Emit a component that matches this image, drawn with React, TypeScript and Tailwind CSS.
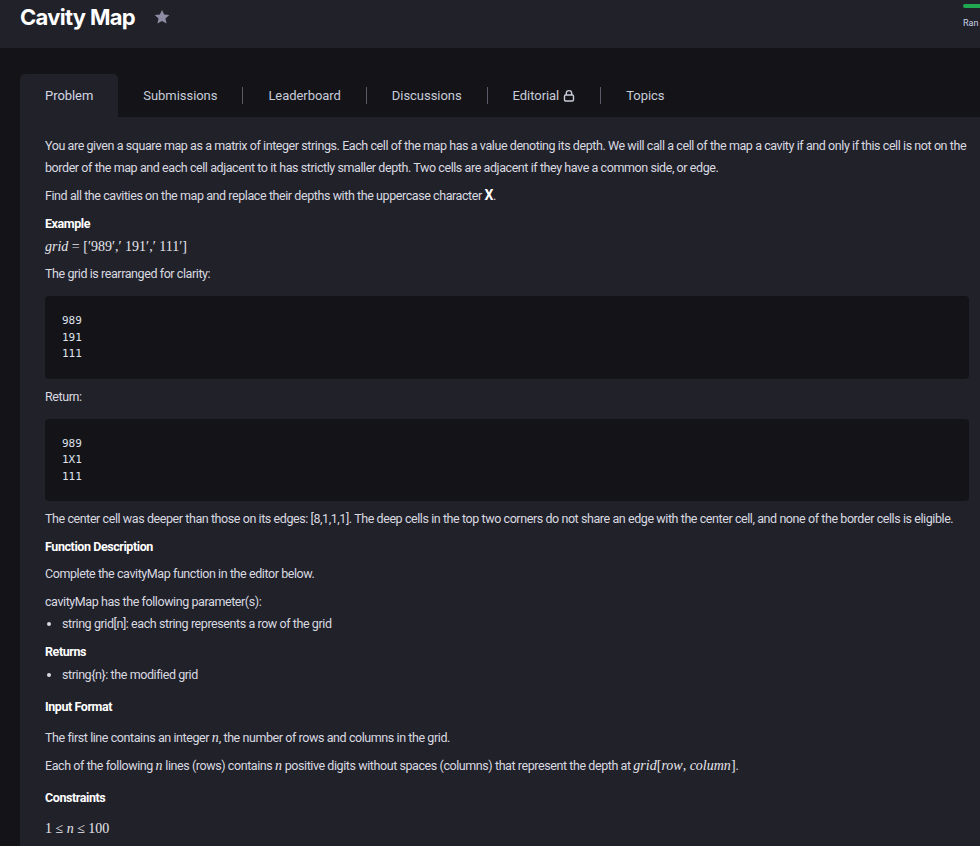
import React from 'react';

const tabs = ['Problem', 'Submissions', 'Leaderboard', 'Discussions', 'Editorial', 'Topics'];

const Lock: React.FC = () => (
    <svg width="12" height="13" viewBox="0 0 12 13" fill="none" stroke="currentColor" strokeWidth="1.4" className="ml-[4px]">
        <path d="M3.3 6V4.3a2.7 2.7 0 0 1 5.4 0V6" />
        <rect x="1.5" y="6" width="9" height="6" rx="1.2" />
    </svg>
);

const Math: React.FC<{ children: React.ReactNode }> = ({ children }) => (
    <span className="font-['Liberation_Serif',serif] text-[14px] tracking-normal text-[#e6e6ea]">{children}</span>
);

const I: React.FC<{ children: React.ReactNode }> = ({ children }) => <i className="italic">{children}</i>;

const Code: React.FC<{ lines: string[] }> = ({ lines }) => (
    <pre className="bg-[#141418] rounded-[4px] px-[17px] pt-[17px] pb-[16px] mr-[5px] font-['DejaVu_Sans_Mono',monospace] text-[11px] leading-[16.5px] tracking-normal text-[#dfe3ee] mt-[11px] mb-[7px]">
        {lines.join('\n')}
    </pre>
);

const H: React.FC<{ children: React.ReactNode; className?: string }> = ({ children, className }) => (
    <h3 className={`font-bold text-white text-[12.5px] leading-[22px] ${className ?? ''}`}>{children}</h3>
);

const App: React.FC = () => {
    return (
        <div className="w-[980px] h-[846px] overflow-hidden bg-[#141418] font-['Roboto',sans-serif] text-[#d9dae0]">
            {/* Header */}
            <header className="h-[48px] bg-[#21212a] flex items-start justify-between pl-[20px]">
                <div className="flex items-center h-[34px] gap-[18px]">
                    <h1 className="text-[22px] font-bold text-white font-['Inter',sans-serif] tracking-[-0.7px]">Cavity Map</h1>
                    <svg width="18" height="18" viewBox="0 0 24 24" fill="#8c8ca3">
                        <path d="M12 2.5l2.9 6.2 6.8.7-5.1 4.6 1.5 6.7L12 17.3l-6.1 3.4 1.5-6.7-5.1-4.6 6.8-.7z" />
                    </svg>
                </div>
                <div className="w-[17px] pt-[4px] flex flex-col overflow-visible">
                    <div className="h-[4px] w-[20px] rounded-full bg-[#1fa84f]" />
                    <span className="text-[9px] text-[#c9d3e6] mt-[9px] whitespace-nowrap">Ran</span>
                </div>
            </header>

            <div className="pl-[20px] pt-[26px]">
                {/* Tabs */}
                <nav className="flex items-center h-[43px] tracking-[-0.05px]">
                    {tabs.map((t, i) => (
                        <React.Fragment key={t}>
                            {i > 1 && <span className="w-px h-[17px] bg-[#5a5b66]" />}
                            <div
                                className={`h-full flex items-center px-[25px] text-[13px] ${
                                    i === 0 ? 'bg-[#21212a] rounded-t-[5px] text-[#d4d7e2]' : 'text-[#c8ccd9]'
                                }`}
                            >
                                {t}
                                {t === 'Editorial' && <Lock />}
                            </div>
                        </React.Fragment>
                    ))}
                </nav>

                {/* Problem body */}
                <section className="bg-[#21212a] pl-[25px] pr-[6px] pt-[18px] pb-[40px] text-[12.5px] leading-[22px] tracking-[-0.42px]">
                    <p className="mb-[5px]">
                        You are given a square map as a matrix of integer strings. Each cell of the map has a value denoting its depth. We will call a cell of the map a cavity if and only if this cell is not on the border of the map and each cell adjacent to it has strictly smaller depth. Two cells are adjacent if they have a common side, or edge.
                    </p>
                    <p className="mb-[6px]">
                        Find all the cavities on the map and replace their depths with the uppercase character <b className="text-white text-[14px]">X</b>.
                    </p>
                    <H>Example</H>
                    <p className="mt-[1px]">
                        <Math>
                            <I>grid</I> = [′989′,′ 191′,′ 111′]
                        </Math>
                    </p>
                    <p className="mt-[5px]">The grid is rearranged for clarity:</p>
                    <Code lines={['989', '191', '111']} />
                    <p>Return:</p>
                    <Code lines={['989', '1X1', '111']} />
                    <p className="mb-[6px]">
                        The center cell was deeper than those on its edges: [8,1,1,1]. The deep cells in the top two corners do not share an edge with the center cell, and none of the border cells is eligible.
                    </p>
                    <H>Function Description</H>
                    <p className="mt-[5px] mb-[6px]">Complete the cavityMap function in the editor below.</p>
                    <p>cavityMap has the following parameter(s):</p>
                    <ul className="list-disc pl-[17px] mb-[6px]">
                        <li>string grid[n]: each string represents a row of the grid</li>
                    </ul>
                    <H>Returns</H>
                    <ul className="list-disc pl-[17px] mt-px">
                        <li>string{'{'}n{'}'}: the modified grid</li>
                    </ul>
                    <H className="mt-[10px]">Input Format</H>
                    <p className="mt-[9px] mb-[6px]">
                        The first line contains an integer <Math><I>n</I></Math>, the number of rows and columns in the grid.
                    </p>
                    <p>
                        Each of the following <Math><I>n</I></Math> lines (rows) contains <Math><I>n</I></Math> positive digits without spaces (columns) that represent the depth at{' '}
                        <Math>
                            <I>grid</I>[<I>row</I>, <I>column</I>]
                        </Math>
                        .
                    </p>
                    <H className="mt-[10px]">Constraints</H>
                    <p className="mt-[9px]">
                        <Math>
                            1 ≤ <I>n</I> ≤ 100
                        </Math>
                    </p>
                </section>
            </div>
        </div>
    );
};

export default App;
